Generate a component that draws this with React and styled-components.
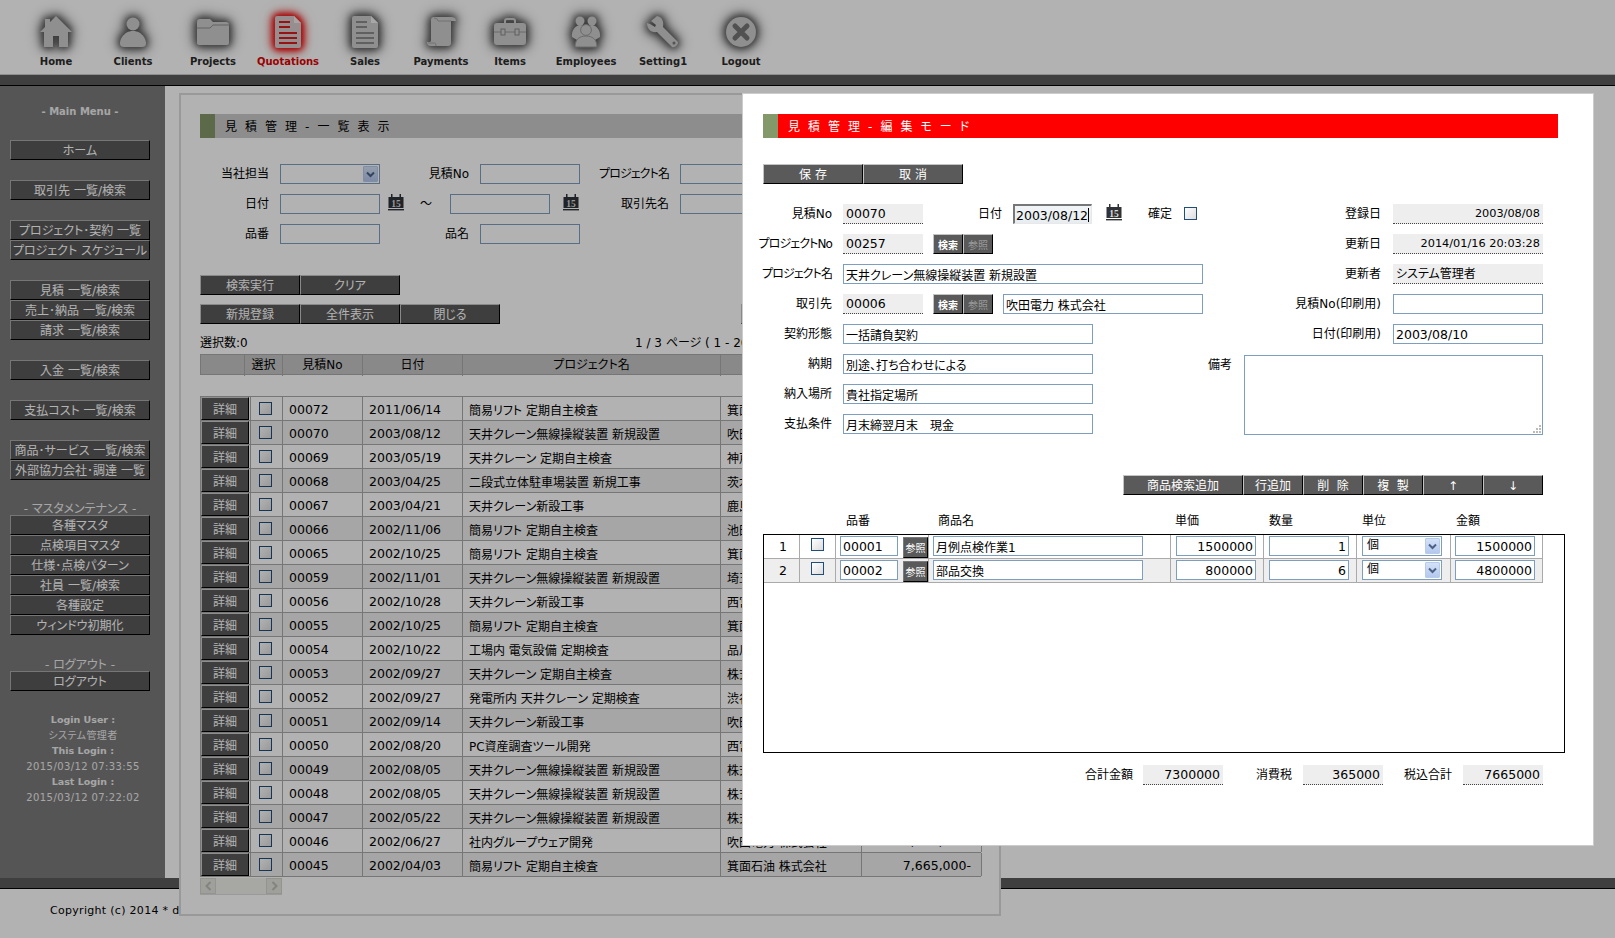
import React from 'react';
import styled, { createGlobalStyle } from 'styled-components';

const GlobalStyle = createGlobalStyle`
  html, body { margin: 0; padding: 0; background: #fff; }
  body {
    font-family: "DejaVu Sans", "Noto Sans CJK JP", sans-serif;
    font-size: 12px;
    font-feature-settings: "palt";
    color: #000;
    overflow: hidden;
  }
  * { box-sizing: border-box; }
`;

/* ---------- page frame ---------- */
const Page = styled.div`
  position: relative;
  width: 1615px;
  height: 938px;
  overflow: hidden;
  background: #fff;
  display: flex;
  flex-direction: column;
`;
const TopNav = styled.nav`
  height: 75px;
  padding-left: 18px;
  display: flex;
  border-bottom: 1px solid #ccc;
`;
const NavItem = styled.a`
  width: ${p => p.$w}px;
  display: flex;
  flex-direction: column;
  align-items: center;
  padding-top: 16px;
  font-size: 10px;
  font-weight: bold;
  line-height: 12px;
  color: ${p => (p.$active ? '#e00000' : '#2a2a2a')};
  svg {
    display: block;
    overflow: visible;
    filter: ${p => (p.$active
      ? 'drop-shadow(0 0 3px #f01010) drop-shadow(0 0 3px #f01010) drop-shadow(0 0 5px #e84040)'
      : 'drop-shadow(0 0 3px #555) drop-shadow(0 0 4px #666) drop-shadow(0 0 6px #888)')};
  }
  span { margin-top: 8px; }
`;
const Band = styled.div`
  height: 11px;
  flex: none;
  background: #5b5b5b;
  border-bottom: 1px solid #000;
`;
const Body = styled.div`
  height: 792px;
  display: flex;
`;
const Sidebar = styled.aside`
  width: 165px;
  background: #7a7a7a;
  padding: 19px 0 0 10px;
`;
const MenuTitle = styled.div`
  width: 140px;
  height: 14px;
  line-height: ${p => (p.$big ? '16px' : '14px')};
  text-align: center;
  font-size: ${p => (p.$big ? '12px' : '10px')};
  font-weight: ${p => (p.$big ? 'normal' : 'bold')};
  color: #eee;
  margin-top: ${p => p.$top || 0}px;
  white-space: nowrap;
`;
const MenuButton = styled.div`
  width: 140px;
  height: 20px;
  line-height: 20px;
  text-align: center;
  white-space: nowrap;
  overflow: hidden;
  color: #fff;
  background: #5a5a5a;
  border: 1px solid;
  border-color: #aaa #000 #000 #aaa;
  margin-top: ${p => p.$top || 0}px;
`;
const LoginInfo = styled.div`
  width: 140px;
  margin-top: 21px;
  margin-left: 3px;
  text-align: center;
  color: #eee;
  font-size: 9.5px;
  line-height: 15.5px;
  b { display: block; }
  span { display: block; font-size: 10px; letter-spacing: .4px; white-space: nowrap; }
`;
const Footer = styled.footer`
  flex: 1;
  padding: 15px 0 0 50px;
  font-size: 11px;
  line-height: 14px;
  letter-spacing: .3px;
`;

/* ---------- shared form parts ---------- */
const Dim = styled.div`
  position: absolute;
  inset: 0;
  background: rgba(0, 0, 0, .3);
`;
const TitleBar = styled.h1`
  margin: 0;
  height: 24px;
  line-height: 26px;
  font-size: 12px;
  font-weight: normal;
  letter-spacing: 2.1px;
  white-space: pre;
  border-left: 15px solid #84996a;
  padding-left: 10px;
  background: ${p => (p.$edit ? '#ff0000' : '#cbcbcb')};
  color: ${p => (p.$edit ? '#fff' : '#000')};
`;
const Toolbar = styled.div`
  display: flex;
  margin-top: ${p => p.$top || 0}px;
`;
const Btn = styled.div`
  width: ${p => p.$w || 100}px;
  height: 20px;
  line-height: 21px;
  text-align: center;
  color: #fff;
  background: #5a5a5a;
  border: 1px solid;
  border-color: #c4c4c4 #000 #000 #c4c4c4;
  white-space: pre;
  margin-left: ${p => p.$ml || 0}px;
`;
const Label = styled.label`
  width: ${p => p.$w}px;
  margin-right: ${p => (p.$mr === undefined ? 11 : p.$mr)}px;
  flex: none;
  height: 20px;
  line-height: 21px;
  text-align: right;
  white-space: nowrap;
  letter-spacing: ${p => (p.$tight ? '-.9px' : '0')};
`;
const Input = styled.input`
  display: block;
  flex: none;
  width: ${p => p.$w}px;
  height: 20px;
  margin: 0 0 0 ${p => p.$ml || 0}px;
  padding: 1px 2px 0;
  font: inherit;
  font-size: ${p => (p.$num ? '12.5px' : '12px')};
  font-feature-settings: inherit;
  color: #000;
  background: #fff;
  text-align: ${p => (p.$right ? 'right' : 'left')};
  border: 1px solid #7d9ebf;
  border-radius: 0;
  outline: none;
`;
const ReadField = styled.div`
  flex: none;
  width: ${p => p.$w}px;
  height: 20px;
  line-height: 20px;
  padding: 0 3px;
  background: #eee;
  border-bottom: 1px dotted #444;
  white-space: nowrap;
  text-align: ${p => (p.$right ? 'right' : 'left')};
  font-size: ${p => (p.$small ? '11.3px' : p.$num ? '12.5px' : '12px')};
`;
const Check = styled.span`
  display: block;
  flex: none;
  width: 13px;
  height: 13px;
  border: 1px solid #1f4e79;
  background: linear-gradient(135deg, #fff, #dcdcdc);
`;
const SelectBox = styled.div`
  position: relative;
  flex: none;
  width: ${p => p.$w}px;
  height: 20px;
  line-height: 17px;
  padding-left: 4px;
  margin-left: ${p => p.$ml || 0}px;
  background: #fff;
  border: 1px solid #7d9ebf;
`;
const SelectArrow = styled.span`
  position: absolute;
  right: 1px;
  top: 1px;
  width: 15px;
  height: 16px;
  border-radius: 1px;
  background: linear-gradient(#d4e2f8, #b4c8ee);
  border: 1px solid #b8cbe8;
  display: flex;
  align-items: center;
  justify-content: center;
`;

function Arrow() {
  return (
    <SelectArrow>
      <svg width="9" height="7" viewBox="0 0 9 7">
        <path d="M1 1.5 L4.5 5 L8 1.5" fill="none" stroke="#4d6185" strokeWidth="2" />
      </svg>
    </SelectArrow>
  );
}

const CalWrap = styled.span`
  display: block;
  flex: none;
  width: 16px;
  height: 17px;
  margin-left: ${p => p.$ml || 0}px;
  margin-right: ${p => p.$mr || 0}px;
  svg { display: block; }
`;
function Calendar({ ml, mr }) {
  return (
    <CalWrap $ml={ml} $mr={mr}>
      <svg width="16" height="17" viewBox="0 0 16 17">
        <rect x="0.5" y="3" width="15" height="11" fill="#2f3338" />
        <rect x="3" y="0" width="1.5" height="5" fill="#2f3338" />
        <rect x="11.5" y="0" width="1.5" height="5" fill="#2f3338" />
        <rect x="0" y="15" width="16" height="1.4" fill="#2f3338" />
        <text x="8" y="13" textAnchor="middle" fontSize="9.5" fontWeight="bold" fill="#ddd" fontFamily="Liberation Serif, serif">15</text>
      </svg>
    </CalWrap>
  );
}

/* ---------- nav icons ---------- */
function NavIcon({ name, active }) {
  const fill = active ? '#d9cdcd' : '#cdcdcd';
  const ink = active ? '#d81c1c' : '#8a8a8a';
  const doc = (
    <>
      <path d="M5 0 H22 L29 7 V30 Q29 32 27 32 H5 Q3 32 3 30 V2 Q3 0 5 0 Z" fill={fill} />
      <path d="M22 0 L29 7 H22 Z" fill={active ? '#f3eaea' : '#efefef'} />
      <path d="M7 6 H18 M7 11 H18 M7 17 H25 M7 22 H25 M7 27 H25" stroke={ink} strokeWidth="2" />
    </>
  );
  switch (name) {
    case 'home':
      return <svg width="32" height="32" viewBox="0 0 32 32"><path d="M16 0 L32 16 L28 16 V31 H19 V20 H13 V31 H4 V16 H0 L5 11 V3 H10 V6 Z" fill={fill} /></svg>;
    case 'client':
      return <svg width="32" height="32" viewBox="0 0 32 32"><circle cx="16" cy="8" r="6.5" fill={fill} /><path d="M7 31 C2 31 2 26 5 21 C8 17 11 15 16 15 C21 15 24 17 27 21 C30 26 30 31 25 31 Z" fill={fill} /></svg>;
    case 'folder':
      return (
        <svg width="32" height="32" viewBox="0 0 32 32">
          <path d="M3 3 H13 L16 6 H29 Q32 6 32 9 V27 Q32 29 29 29 H3 Q0 29 0 27 V6 Q0 3 3 3 Z" fill={fill} />
          <path d="M0 12 H13 L16 9 H32" fill="none" stroke="#8f8f8f" strokeWidth="1" />
        </svg>
      );
    case 'doc':
      return <svg width="32" height="32" viewBox="0 0 32 32">{doc}</svg>;
    case 'scroll':
      return (
        <svg width="32" height="32" viewBox="0 0 32 32">
          <path d="M6 4 Q6 1 9 1 H26 Q31 1 31 5 H26 V27 Q26 30 23 30 H6 Q2 30 2 26 H5 Q6 26 6 24 Z" fill={fill} />
          <path d="M9 2 Q13 2 13 5 H26" fill="none" stroke="#9a9a9a" strokeWidth="0.8" />
          <path d="M3 27 H10 Q11 27 11 30" fill="none" stroke="#9a9a9a" strokeWidth="0.8" />
        </svg>
      );
    case 'case':
      return (
        <svg width="32" height="32" viewBox="0 0 32 32">
          <path d="M11 8 V5 Q11 3 13 3 H19 Q21 3 21 5 V8" fill="none" stroke={fill} strokeWidth="2" />
          <rect x="0" y="7" width="32" height="22" rx="3" fill={fill} />
          <path d="M0 16 H32" stroke="#989898" strokeWidth="1" />
          <rect x="7" y="13" width="4" height="6" fill={fill} stroke="#8a8a8a" />
          <rect x="21" y="13" width="4" height="6" fill={fill} stroke="#8a8a8a" />
        </svg>
      );
    case 'people':
      return (
        <svg width="32" height="32" viewBox="0 0 32 32">
          <circle cx="10" cy="5" r="4.5" fill={fill} />
          <circle cx="22" cy="5" r="4.5" fill={fill} />
          <path d="M2 21 C1 14 6 9 10 9 C14 9 16 12 16 12 C16 12 18 9 22 9 C26 9 31 14 30 21 L25 24 H7 Z" fill={fill} />
          <circle cx="16" cy="14" r="5.4" fill={fill} stroke="#9a9a9a" />
          <path d="M5 31 C5 23 10 20 16 20 C22 20 27 23 27 31 Z" fill={fill} stroke="#9a9a9a" />
        </svg>
      );
    case 'wrench':
      return (
        <svg width="32" height="32" viewBox="0 0 32 32">
          <path d="M10 0 L4 5 L9 9 L8 11 L3 8 L0 7 C0 13 4 17 10 16 L25 31 C28 32 31 29 31 26 L16 11 C17 5 15 1 10 0 Z" fill={fill} />
          <circle cx="27" cy="27" r="1.5" fill="#777" />
        </svg>
      );
    default:
      return (
        <svg width="32" height="32" viewBox="0 0 32 32">
          <circle cx="16" cy="16" r="15" fill={fill} />
          <path d="M10 10 L22 22 M22 10 L10 22" stroke="#757575" strokeWidth="5" strokeLinecap="round" />
        </svg>
      );
  }
}

const navItems = [
  { label: 'Home', icon: 'home', w: 76 },
  { label: 'Clients', icon: 'client', w: 78 },
  { label: 'Projects', icon: 'folder', w: 82 },
  { label: 'Quotations', icon: 'doc', w: 68, active: true },
  { label: 'Sales', icon: 'doc', w: 86 },
  { label: 'Payments', icon: 'scroll', w: 66 },
  { label: 'Items', icon: 'case', w: 72 },
  { label: 'Employees', icon: 'people', w: 80 },
  { label: 'Setting1', icon: 'wrench', w: 74 },
  { label: 'Logout', icon: 'close', w: 82 },
];

const menu = [
  { top: 21, label: 'ホーム' },
  { top: 20, label: '取引先 一覧/検索' },
  { top: 20, label: 'プロジェクト･契約 一覧' },
  { label: 'プロジェクト スケジュール' },
  { top: 20, label: '見積 一覧/検索' },
  { label: '売上･納品 一覧/検索' },
  { label: '請求 一覧/検索' },
  { top: 20, label: '入金 一覧/検索' },
  { top: 20, label: '支払コスト 一覧/検索' },
  { top: 20, label: '商品･サービス 一覧/検索' },
  { label: '外部協力会社･調達 一覧' },
];
const masterMenu = ['各種マスタ', '点検項目マスタ', '仕様･点検パターン', '社員 一覧/検索', '各種設定', 'ウィンドウ初期化'];

/* ---------- quotation list window ---------- */
const ListWindow = styled.section`
  position: absolute;
  left: 179px;
  top: 93px;
  width: 822px;
  height: 823px;
  padding: 19px 0 0 19px;
  background: #fff;
  border: 2px solid #dcdcdc;
`;
const FormRow = styled.div`
  display: flex;
  align-items: flex-start;
  height: 20px;
  margin-top: ${p => p.$top || 0}px;
`;
const Tilde = styled.span`
  flex: none;
  width: 30px;
  line-height: 20px;
`;
const CountRow = styled.div`
  display: flex;
  height: 16px;
  line-height: 18px;
  margin-top: 10px;
  white-space: nowrap;
`;
const Count = styled.span`
  width: 435px;
`;
const HeadRow = styled.div`
  display: grid;
  grid-template-columns: 44px 38px 80px 100px 258px 141px 120px;
  width: 781px;
  height: 21px;
  margin-top: 4px;
  background: #c5c5c5;
  border: 1px solid #aaa;
`;
const HeadCell = styled.div`
  text-align: center;
  line-height: 21px;
  border-right: 1px solid #aaa;
`;
const Rows = styled.div`
  width: 781px;
  margin-top: 21px;
  border-top: 1px solid #aaa;
`;
const Row = styled.div`
  display: grid;
  grid-template-columns: 50px 32px 80px 100px 258px 141px 120px;
  height: 24px;
  border-left: 1px solid #aaa;
  border-bottom: 1px solid #aaa;
  background: ${p => (p.$alt ? '#eee' : '#fff')};
`;
const Cell = styled.div`
  display: flex;
  align-items: center;
  padding: 1px ${p => (p.$right ? 10 : 6)}px 0 6px;
  white-space: nowrap;
  overflow: hidden;
  font-size: ${p => (p.$num ? '12.5px' : '12px')};
  border-right: 1px solid #aaa;
  justify-content: ${p => (p.$right ? 'flex-end' : 'flex-start')};
`;
const ActionCell = styled.div`
  border-right: 1px solid #aaa;
  background: #fff;
`;
const DetailBtn = styled.div`
  width: 48px;
  height: 23px;
  line-height: 24px;
  text-align: center;
  color: #fff;
  background: #5a5a5a;
  border: 1px solid;
  border-color: #ccc #000 #000 #ccc;
`;
const CheckCell = styled.div`
  display: flex;
  justify-content: center;
  padding: 5px 2px 0 0;
  border-right: 1px solid #aaa;
`;
const Scroller = styled.div`
  display: flex;
  justify-content: space-between;
  width: 82px;
  height: 17px;
  margin-top: 1px;
  background: #f0efea;
  border-bottom: 1px solid #ddd;
`;
const ScrollBtn = styled.span`
  width: 16px;
  height: 16px;
  display: flex;
  align-items: center;
  justify-content: center;
  background: #e4e4de;
  border: 1px solid #d4d4cc;
`;

const rows = [
  ['00072', '2011/06/14', '簡易リフト 定期自主検査', '箕面'],
  ['00070', '2003/08/12', '天井クレーン無線操縦装置 新規設置', '吹田'],
  ['00069', '2003/05/19', '天井クレーン 定期自主検査', '神戸'],
  ['00068', '2003/04/25', '二段式立体駐車場装置 新規工事', '茨木'],
  ['00067', '2003/04/21', '天井クレーン新設工事', '鹿島'],
  ['00066', '2002/11/06', '簡易リフト 定期自主検査', '池田'],
  ['00065', '2002/10/25', '簡易リフト 定期自主検査', '箕面'],
  ['00059', '2002/11/01', '天井クレーン無線操縦装置 新規設置', '埼玉'],
  ['00056', '2002/10/28', '天井クレーン新設工事', '西宮'],
  ['00055', '2002/10/25', '簡易リフト 定期自主検査', '箕面'],
  ['00054', '2002/10/22', '工場内 電気設備 定期検査', '品川'],
  ['00053', '2002/09/27', '天井クレーン 定期自主検査', '株式'],
  ['00052', '2002/09/27', '発電所内 天井クレーン 定期検査', '渋谷'],
  ['00051', '2002/09/14', '天井クレーン新設工事', '吹田'],
  ['00050', '2002/08/20', 'PC資産調査ツール開発', '西宮'],
  ['00049', '2002/08/05', '天井クレーン無線操縦装置 新規設置', '株式'],
  ['00048', '2002/08/05', '天井クレーン無線操縦装置 新規設置', '株式'],
  ['00047', '2002/05/22', '天井クレーン無線操縦装置 新規設置', '株式'],
  ['00046', '2002/06/27', '社内グループウェア開発', '吹田電力 株式会社', '7,665,000-'],
  ['00045', '2002/04/03', '簡易リフト 定期自主検査', '箕面石油 株式会社', '7,665,000-'],
];

function ListPanel() {
  return (
    <ListWindow>
      <TitleBar>{'見 積 管 理 - 一 覧 表 示'}</TitleBar>
      <FormRow $top={26}>
        <Label $w={69}>当社担当</Label>
        <SelectBox $w={100}><Arrow /></SelectBox>
        <Label $w={89}>見積No</Label>
        <Input $w={100} readOnly />
        <Label $w={89} $tight>プロジェクト名</Label>
        <Input $w={100} readOnly />
      </FormRow>
      <FormRow $top={10}>
        <Label $w={69}>日付</Label>
        <Input $w={100} readOnly />
        <Calendar ml={8} mr={16} />
        <Tilde>～</Tilde>
        <Input $w={100} readOnly />
        <Calendar ml={13} />
        <Label $w={90}>取引先名</Label>
        <Input $w={100} readOnly />
      </FormRow>
      <FormRow $top={10}>
        <Label $w={69}>品番</Label>
        <Input $w={100} readOnly />
        <Label $w={89}>品名</Label>
        <Input $w={100} readOnly />
      </FormRow>
      <Toolbar $top={31}>
        <Btn>検索実行</Btn>
        <Btn>クリア</Btn>
      </Toolbar>
      <Toolbar $top={9}>
        <Btn>新規登録</Btn>
        <Btn>全件表示</Btn>
        <Btn>閉じる</Btn>
        <Btn $ml={241} />
      </Toolbar>
      <CountRow>
        <Count>選択数:0</Count>
        <span>1 / 3 ページ ( 1 - 20</span>
      </CountRow>
      <HeadRow>
        <HeadCell />
        <HeadCell>選択</HeadCell>
        <HeadCell>見積No</HeadCell>
        <HeadCell>日付</HeadCell>
        <HeadCell>プロジェクト名</HeadCell>
        <HeadCell />
        <HeadCell />
      </HeadRow>
      <Rows>
        {rows.map((r, i) => (
          <Row key={r[0]} $alt={i % 2 === 1}>
            <ActionCell><DetailBtn>詳細</DetailBtn></ActionCell>
            <CheckCell><Check /></CheckCell>
            <Cell $num>{r[0]}</Cell>
            <Cell $num>{r[1]}</Cell>
            <Cell>{r[2]}</Cell>
            <Cell>{r[3]}</Cell>
            <Cell $right $num>{r[4]}</Cell>
          </Row>
        ))}
      </Rows>
      <Scroller>
        <ScrollBtn>
          <svg width="7" height="10" viewBox="0 0 7 10"><path d="M5.5 1 L1.5 5 L5.5 9" fill="none" stroke="#bdbdb6" strokeWidth="2" /></svg>
        </ScrollBtn>
        <ScrollBtn>
          <svg width="7" height="10" viewBox="0 0 7 10"><path d="M1.5 1 L5.5 5 L1.5 9" fill="none" stroke="#bdbdb6" strokeWidth="2" /></svg>
        </ScrollBtn>
      </Scroller>
    </ListWindow>
  );
}

/* ---------- edit modal ---------- */
const EditModal = styled.section`
  position: absolute;
  left: 742px;
  top: 93px;
  width: 852px;
  height: 753px;
  padding-top: 20px;
  background: #fff;
  border: 1px solid #ccc;
`;
const ModalTitle = styled.div`
  margin: 0 35px 0 20px;
`;
const SaveBar = styled.div`
  display: flex;
  margin: 26px 0 0 20px;
`;
const FormArea = styled.div`
  display: flex;
  margin-top: 20px;
  height: 231px;
`;
const LeftCol = styled.div`
  width: 460px;
  display: flex;
  flex-direction: column;
  gap: 10px;
`;
const RightCol = styled.div`
  width: 340px;
  display: flex;
  flex-direction: column;
  gap: 10px;
`;
const ModalRow = styled.div`
  display: flex;
  align-items: flex-start;
  height: 20px;
`;
const ActiveField = styled.div`
  flex: none;
  width: ${p => p.$w}px;
  height: 20px;
  line-height: 19px;
  padding-left: 1px;
  font-size: 12.5px;
  white-space: nowrap;
  background: linear-gradient(#f2f5f7, #e6ecf0);
  border: 1px solid #e8e8e8;
  border-top: 2px solid #777;
  border-left: 2px solid #777;
  i {
    display: inline-block;
    width: 1px;
    height: 14px;
    background: #000;
    vertical-align: -2px;
  }
`;
const SmallBtns = styled.div`
  display: flex;
  margin-left: 10px;
`;
const SmallBtn = styled.div`
  width: 30px;
  height: 20px;
  line-height: 21px;
  font-size: 10px;
  font-weight: ${p => (p.$off ? 'normal' : 'bold')};
  text-align: center;
  background: #5a5a5a;
  color: ${p => (p.$off ? '#9a9a9a' : '#fff')};
  border: 1px solid;
  border-color: #c4c4c4 #000 #000 #c4c4c4;
`;
const NoteRow = styled.div`
  display: flex;
  align-items: flex-start;
  margin-top: 1px;
`;
const NoteBox = styled.div`
  position: relative;
  width: 300px;
  height: 80px;
  background: #fff;
  border: 1px solid #7d9ebf;
`;
const Grip = styled.svg`
  position: absolute;
  right: 1px;
  bottom: 1px;
`;
const LineBar = styled.div`
  display: flex;
  justify-content: flex-end;
  margin: 40px 50px 0 0;
`;
const LineHeads = styled.div`
  height: 16px;
  margin-top: 18px;
  display: grid;
  grid-template-columns: 92px 237px 94px 93px 94px 80px;
  padding-left: 103px;
  line-height: 17px;
`;
const LineBox = styled.div`
  width: 802px;
  height: 219px;
  margin: 5px 0 0 20px;
  border: 1px solid #000;
`;
const LineRow = styled.div`
  display: grid;
  grid-template-columns: 36px 36px 93px 242px 93px 93px 94px 92px;
  width: 779px;
  height: 24px;
  border-bottom: 1px solid #aaa;
  background: ${p => (p.$alt ? '#eee' : '#fff')};
`;
const LineCell = styled.div`
  display: flex;
  align-items: flex-start;
  justify-content: ${p => (p.$center ? 'center' : 'flex-start')};
  padding: ${p => (p.$center ? `3px 0 0 ${p.$pad || 0}px` : '1px 0 0 4px')};
  line-height: 18px;
  font-size: ${p => (p.$pad ? '12.5px' : '12px')};
  border-right: 1px solid #aaa;
`;
const RefBtn = styled(SmallBtn)`
  width: 25px;
  height: 21px;
  margin-left: 5px;
  margin-top: 1px;
  font-weight: normal;
  color: #fff;
  border-color: #7a7a7a #000 #000 #7a7a7a;
  line-height: 21px;
`;
const Totals = styled.div`
  display: flex;
  margin-top: 12px;
  padding-left: 311px;
`;
const CheckSlot = styled.span`
  padding-top: 3px;
`;

const lines = [
  { no: 1, code: '00001', name: '月例点検作業1', price: '1500000', qty: '1', amount: '1500000' },
  { no: 2, code: '00002', name: '部品交換', price: '800000', qty: '6', amount: '4800000' },
];

function EditPanel() {
  return (
    <EditModal>
      <ModalTitle><TitleBar $edit>{'見 積 管 理 - 編 集 モ ー ド'}</TitleBar></ModalTitle>
      <SaveBar>
        <Btn>{'保 存'}</Btn>
        <Btn>{'取 消'}</Btn>
      </SaveBar>
      <FormArea>
        <LeftCol>
          <ModalRow>
            <Label $w={89}>見積No</Label>
            <ReadField $w={80} $num>00070</ReadField>
            <Label $w={79}>日付</Label>
            <ActiveField $w={79}>2003/08/12<i /></ActiveField>
            <Calendar ml={14} />
            <Label $w={50} $mr={12}>確定</Label>
            <CheckSlot><Check /></CheckSlot>
          </ModalRow>
          <ModalRow>
            <Label $w={89} $tight>プロジェクトNo</Label>
            <ReadField $w={80} $num>00257</ReadField>
            <SmallBtns>
              <SmallBtn>検索</SmallBtn>
              <SmallBtn $off>参照</SmallBtn>
            </SmallBtns>
          </ModalRow>
          <ModalRow>
            <Label $w={89} $tight>プロジェクト名</Label>
            <Input $w={360} readOnly value="天井クレーン無線操縦装置 新規設置" />
          </ModalRow>
          <ModalRow>
            <Label $w={89}>取引先</Label>
            <ReadField $w={80} $num>00006</ReadField>
            <SmallBtns>
              <SmallBtn>検索</SmallBtn>
              <SmallBtn $off>参照</SmallBtn>
            </SmallBtns>
            <Input $w={200} $ml={10} readOnly value="吹田電力 株式会社" />
          </ModalRow>
          <ModalRow>
            <Label $w={89}>契約形態</Label>
            <Input $w={250} readOnly value="一括請負契約" />
          </ModalRow>
          <ModalRow>
            <Label $w={89}>納期</Label>
            <Input $w={250} readOnly value="別途、打ち合わせによる" />
          </ModalRow>
          <ModalRow>
            <Label $w={89}>納入場所</Label>
            <Input $w={250} readOnly value="貴社指定場所" />
          </ModalRow>
          <ModalRow>
            <Label $w={89}>支払条件</Label>
            <Input $w={250} readOnly value="月末締翌月末　現金" />
          </ModalRow>
        </LeftCol>
        <RightCol>
          <ModalRow>
            <Label $w={178} $mr={12}>登録日</Label>
            <ReadField $w={150} $right $small>2003/08/08</ReadField>
          </ModalRow>
          <ModalRow>
            <Label $w={178} $mr={12}>更新日</Label>
            <ReadField $w={150} $right $small>2014/01/16 20:03:28</ReadField>
          </ModalRow>
          <ModalRow>
            <Label $w={178} $mr={12}>更新者</Label>
            <ReadField $w={150}>システム管理者</ReadField>
          </ModalRow>
          <ModalRow>
            <Label $w={178} $mr={12}>見積No(印刷用)</Label>
            <Input $w={150} readOnly />
          </ModalRow>
          <ModalRow>
            <Label $w={178} $mr={12}>日付(印刷用)</Label>
            <Input $w={150} $num readOnly value="2003/08/10" />
          </ModalRow>
          <NoteRow>
            <Label $w={29} $mr={12}>備考</Label>
            <NoteBox>
              <Grip width="9" height="9" viewBox="0 0 9 9">
                <path d="M7 1h2v2H7zM4 4h2v2H4zM7 4h2v2H7zM1 7h2v2H1zM4 7h2v2H4zM7 7h2v2H7z" fill="#bbb" />
              </Grip>
            </NoteBox>
          </NoteRow>
        </RightCol>
      </FormArea>
      <LineBar>
        <Btn $w={120}>商品検索追加</Btn>
        <Btn $w={60}>行追加</Btn>
        <Btn $w={60}>{'削  除'}</Btn>
        <Btn $w={60}>{'複  製'}</Btn>
        <Btn $w={60}>↑</Btn>
        <Btn $w={60}>↓</Btn>
      </LineBar>
      <LineHeads>
        <span>品番</span>
        <span>商品名</span>
        <span>単価</span>
        <span>数量</span>
        <span>単位</span>
        <span>金額</span>
      </LineHeads>
      <LineBox>
        {lines.map((l, i) => (
          <LineRow key={l.no} $alt={i === 1}>
            <LineCell $center $pad={3}>{l.no}</LineCell>
            <LineCell $center><Check /></LineCell>
            <LineCell>
              <Input $w={58} $num readOnly value={l.code} />
              <RefBtn>参照</RefBtn>
            </LineCell>
            <LineCell><Input $w={210} readOnly value={l.name} /></LineCell>
            <LineCell><Input $w={80} $ml={1} $num $right readOnly value={l.price} /></LineCell>
            <LineCell><Input $w={80} $ml={1} $num $right readOnly value={l.qty} /></LineCell>
            <LineCell><SelectBox $w={80} $ml={1}>個<Arrow /></SelectBox></LineCell>
            <LineCell><Input $w={80} $num $right readOnly value={l.amount} /></LineCell>
          </LineRow>
        ))}
      </LineBox>
      <Totals>
        <Label $w={79} $mr={10}>合計金額</Label>
        <ReadField $w={80} $right $num>7300000</ReadField>
        <Label $w={69} $mr={11}>消費税</Label>
        <ReadField $w={80} $right $num>365000</ReadField>
        <Label $w={69} $mr={11}>税込合計</Label>
        <ReadField $w={80} $right $num>7665000</ReadField>
      </Totals>
    </EditModal>
  );
}

export default function App() {
  return (
    <Page>
      <GlobalStyle />
      <TopNav>
        {navItems.map(n => (
          <NavItem key={n.label} $w={n.w} $active={n.active}>
            <NavIcon name={n.icon} active={n.active} />
            <span>{n.label}</span>
          </NavItem>
        ))}
      </TopNav>
      <Band />
      <Body>
        <Sidebar>
          <MenuTitle>- Main Menu -</MenuTitle>
          {menu.map(m => <MenuButton key={m.label} $top={m.top}>{m.label}</MenuButton>)}
          <MenuTitle $big $top={21}>- マスタメンテナンス -</MenuTitle>
          {masterMenu.map(m => <MenuButton key={m}>{m}</MenuButton>)}
          <MenuTitle $big $top={22}>- ログアウト -</MenuTitle>
          <MenuButton>ログアウト</MenuButton>
          <LoginInfo>
            <b>Login User :</b>
            <span>システム管理者</span>
            <b>This Login :</b>
            <span>2015/03/12 07:33:55</span>
            <b>Last Login :</b>
            <span>2015/03/12 07:22:02</span>
          </LoginInfo>
        </Sidebar>
      </Body>
      <Band />
      <Footer>Copyright (c) 2014 * digital-works</Footer>
      <ListPanel />
      <Dim />
      <EditPanel />
    </Page>
  );
}
